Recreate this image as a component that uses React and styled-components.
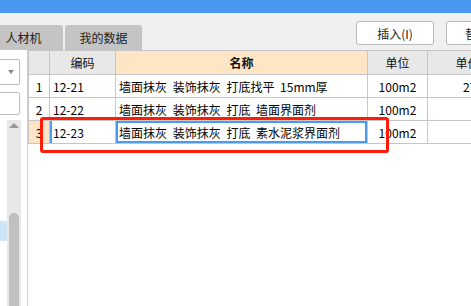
import React from 'react'
import styled, { createGlobalStyle } from 'styled-components'

const GlobalStyle = createGlobalStyle`
  html, body {
    margin: 0;
    padding: 0;
    background: #f0f0f0;
    overflow: hidden;
  }
  body {
    font-family: "Noto Sans CJK SC", "Noto Sans", sans-serif;
    font-size: 12px;
    color: #000;
  }
`

const Page = styled.div`
  width: 100vw;
  height: 100vh;
  display: flex;
  flex-direction: column;
  overflow: hidden;
`

const TopBar = styled.div`
  height: 13px;
  background: #4a97f2;
  flex-shrink: 0;
`

const Toolbar = styled.div`
  height: 37px;
  display: flex;
  flex-shrink: 0;
  overflow: hidden;
`

const Tabs = styled.div`
  display: flex;
  align-items: flex-end;
  gap: 2px;
  margin-left: -16px;
`

const Tab = styled.div`
  width: ${p => p.$w}px;
  height: 25px;
  box-sizing: border-box;
  background: #c4c4c4;
  border-radius: 3px 3px 0 0;
  display: flex;
  align-items: center;
  justify-content: center;
  font-size: 12px;
  color: #222;
`

const Buttons = styled.div`
  display: flex;
  gap: 12px;
  margin-left: 214px;
  margin-top: 8px;
  flex-shrink: 0;
`

const Button = styled.div`
  width: 78px;
  height: 24px;
  box-sizing: border-box;
  background: #fff;
  border: 1px solid #b8b8b8;
  border-radius: 3px;
  display: flex;
  align-items: center;
  justify-content: center;
  font-size: 12px;
  color: #222;
`

const Content = styled.div`
  flex: 1;
  display: flex;
  position: relative;
  min-height: 0;
`

const LeftPanel = styled.div`
  width: 27px;
  flex-shrink: 0;
  background: #fff;
  border-right: 1px solid #cfcfcf;
  display: flex;
  flex-direction: column;
  padding-top: 9px;
  overflow: hidden;
`

const Field = styled.div`
  margin-left: -10px;
  width: 30px;
  height: ${p => p.$h}px;
  margin-top: ${p => p.$top || 0}px;
  box-sizing: border-box;
  background: #fff;
  border: 1px solid #bdbdbd;
  border-radius: 2px;
  display: flex;
  align-items: center;
  justify-content: flex-end;
  padding-right: 5px;
  flex-shrink: 0;
`

const DownArrow = styled.div`
  width: 0;
  height: 0;
  border-left: 3px solid transparent;
  border-right: 3px solid transparent;
  border-top: 4px solid #8a8a8a;
`

const ScrollRow = styled.div`
  flex: 1;
  display: flex;
  margin-top: 5px;
`

const TreeStrip = styled.div`
  width: 7px;
  padding-top: 101px;
`

const TreeHighlight = styled.div`
  height: 20px;
  background: #cce5f9;
`

const Scrollbar = styled.div`
  width: 14px;
  background: #e8e8e8;
  display: flex;
  flex-direction: column;
  align-items: center;
`

const UpArrow = styled.div`
  margin-top: 3px;
  width: 0;
  height: 0;
  border-left: 5px solid transparent;
  border-right: 5px solid transparent;
  border-bottom: 5px solid #9a9a9a;
`

const Thumb = styled.div`
  margin-top: auto;
  width: 10px;
  height: 93px;
  background: #c0c0c0;
  border-radius: 5px 5px 0 0;
`

const GridArea = styled.div`
  flex: 1;
  background: #fff;
  overflow: hidden;
`

const Table = styled.table`
  border-collapse: collapse;
  table-layout: fixed;
  width: 479px;
`

const HeadCell = styled.th`
  height: 23px;
  padding: 0;
  border: 1px solid #c6c6c6;
  background: ${p => p.$bg || '#e8e8e8'};
  font-weight: ${p => (p.$bold ? 700 : 400)};
  font-size: 12px;
  text-align: center;
  color: #111;
  white-space: nowrap;
  overflow: hidden;
`

const Cell = styled.td`
  height: 22px;
  padding: 0 0 0 ${p => (p.$align === 'left' ? 3 : 0)}px;
  padding-right: ${p => (p.$align === 'right' ? 14 : 0)}px;
  border: 1px solid #c6c6c6;
  background: ${p => p.$bg || '#fff'};
  text-align: ${p => p.$align || 'center'};
  white-space: nowrap;
  overflow: hidden;
  word-spacing: 3px;
  box-shadow: ${p =>
    p.$edit === 'box'
      ? 'inset 0 0 0 2px #4a9af5'
      : p.$edit === 'left'
      ? 'inset 2px 0 0 #4a9af5'
      : 'none'};
`

const Highlight = styled.div`
  position: absolute;
  left: 40px;
  top: 67px;
  width: 349px;
  height: 36px;
  box-sizing: border-box;
  border: 3px solid #ff1a0a;
  border-radius: 3px;
  pointer-events: none;
`

const rows = [
  { no: 1, code: '12-21', name: '墙面抹灰 装饰抹灰 打底找平 15mm厚', unit: '100m2', price: '27.11' },
  { no: 2, code: '12-22', name: '墙面抹灰 装饰抹灰 打底 墙面界面剂', unit: '100m2', price: '' },
  { no: 3, code: '12-23', name: '墙面抹灰 装饰抹灰 打底 素水泥浆界面剂', unit: '100m2', price: '', current: true },
]

const App = () => {
  return (
    <Page>
      <GlobalStyle />
      <TopBar />
      <Toolbar>
        <Tabs>
          <Tab $w={79}>人材机</Tab>
          <Tab $w={77}>我的数据</Tab>
        </Tabs>
        <Buttons>
          <Button>插入(I)</Button>
          <Button>替换(R)</Button>
        </Buttons>
      </Toolbar>
      <Content>
        <LeftPanel>
          <Field $h={26}>
            <DownArrow />
          </Field>
          <Field $h={23} $top={7} />
          <ScrollRow>
            <TreeStrip>
              <TreeHighlight />
            </TreeStrip>
            <Scrollbar>
              <UpArrow />
              <Thumb />
            </Scrollbar>
          </ScrollRow>
        </LeftPanel>
        <GridArea>
          <Table>
            <colgroup>
              <col style={{ width: 21 }} />
              <col style={{ width: 66 }} />
              <col style={{ width: 252 }} />
              <col style={{ width: 60 }} />
              <col style={{ width: 80 }} />
            </colgroup>
            <thead>
              <tr>
                <HeadCell />
                <HeadCell>编码</HeadCell>
                <HeadCell $bg="#fde5c6" $bold>名称</HeadCell>
                <HeadCell>单位</HeadCell>
                <HeadCell>单价</HeadCell>
              </tr>
            </thead>
            <tbody>
              {rows.map(r => (
                <tr key={r.no}>
                  <Cell $bg={r.current ? '#fde5c6' : undefined}>{r.no}</Cell>
                  <Cell $align="left" $edit={r.current ? 'left' : undefined}>{r.code}</Cell>
                  <Cell $align="left" $edit={r.current ? 'box' : undefined}>{r.name}</Cell>
                  <Cell>{r.unit}</Cell>
                  <Cell $align="right">{r.price}</Cell>
                </tr>
              ))}
            </tbody>
          </Table>
        </GridArea>
        <Highlight />
      </Content>
    </Page>
  )
}

export default App
